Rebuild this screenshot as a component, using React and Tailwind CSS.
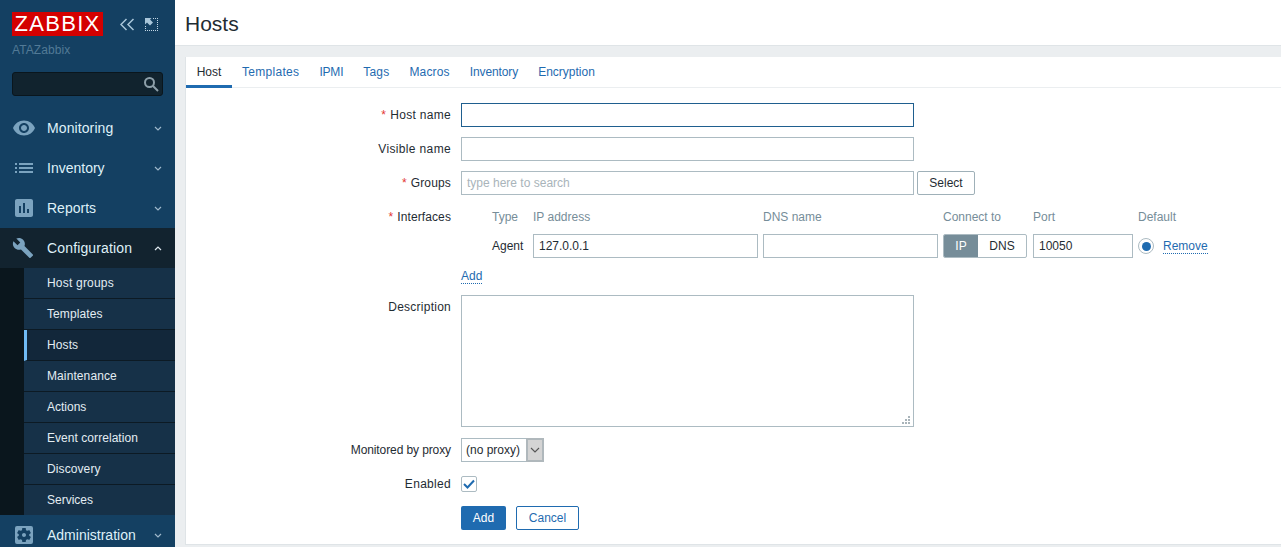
import React from "react";
import { MdRemoveRedEye, MdList, MdAssessment, MdBuild, MdSettingsApplications } from "react-icons/md";

const ChevDown = () => (
  <svg width="8" height="5" viewBox="0 0 8 5" fill="none" stroke="#9fb8cb" strokeWidth="1.2"><path d="M1 1l3 3 3-3" /></svg>
);
const ChevUp = () => (
  <svg width="8" height="5" viewBox="0 0 8 5" fill="none" stroke="#dfe9f0" strokeWidth="1.2"><path d="M1 4l3-3 3 3" /></svg>
);

function MainItem({ icon, label, active, track = "" }) {
  return (
    <div className={`h-10 shrink-0 flex items-center pl-3 pr-[13px] ${active ? "bg-[#12232f]" : ""}`}>
      <span className="w-[35px] flex items-center text-[#7ba3bf]">{icon}</span>
      <span className={`flex-1 text-[14px] text-[#dff0f8] ${track}`}>{label}</span>
      {active ? <ChevUp /> : <ChevDown />}
    </div>
  );
}

function SubItem({ label, active, last, track }) {
  return (
    <div className={`flex items-center text-[12px] text-[#e3edf3] ${track} ${last ? "h-[30px]" : "h-[31px] border-b border-[#0c1a24]"} ${active ? "bg-[#12273a] border-l-[3px] border-l-[#70bbf5] pl-5" : "pl-[23px]"}`}>
      {label}
    </div>
  );
}

const inputCls = "h-6 border border-[#acbbc2] bg-white px-[5px] text-[12px] text-[#1f2c33] flex items-center";

function Row({ label, req, children, className = "", track = "" }) {
  return (
    <div className={`flex ${className}`}>
      <div className={`w-[265px] shrink-0 text-right text-[12px] text-[#1f2c33] leading-6 ${track}`}>
        {req && <span className="text-[#e33734] mr-1">*</span>}{label}
      </div>
      <div className="ml-[10px] flex-1 min-w-0">{children}</div>
    </div>
  );
}

const tabs = [
  ["Templates", "tracking-[0.3px]"],
  ["IPMI", "tracking-[-0.2px]"],
  ["Tags", "tracking-[0.2px]"],
  ["Macros", "tracking-[0.15px]"],
  ["Inventory", "tracking-[-0.1px]"],
  ["Encryption", ""],
];
const subs = [
  ["Host groups", "tracking-[0.2px]"],
  ["Templates", "tracking-[0.1px]"],
  ["Hosts", "tracking-[0.1px]"],
  ["Maintenance", "tracking-[0.1px]"],
  ["Actions", ""],
  ["Event correlation", "tracking-[0.05px]"],
  ["Discovery", "tracking-[0.1px]"],
  ["Services", ""],
];

export default function App() {
  return (
    <div className="flex h-[547px] w-full overflow-hidden bg-[#ebeef0]" style={{ fontFamily: '"Liberation Sans", Arial, sans-serif' }}>
      <aside className="w-[175px] shrink-0 bg-[#144062] flex flex-col overflow-hidden">
        <div className="h-[108px] shrink-0 px-3 pt-3">
          <div className="flex items-center">
            <div className="w-[91px] h-6 bg-[#d40000] text-white text-[22px] leading-6 tracking-[1.3px] text-center overflow-hidden">ZABBIX</div>
            <svg className="ml-[17px]" width="15" height="13" viewBox="0 0 15 13" fill="none" stroke="#a9c6da" strokeWidth="1.5"><path d="M6.500 1L1 6.500 6.500 12M13.500 1L8 6.500l5.500 5.500" /></svg>
            <svg className="ml-[10px]" width="13" height="13" viewBox="0 0 13 13" fill="none" shapeRendering="crispEdges">
              <path d="M8 .5h4.500V12.500H.5V8" stroke="#c4d8e6" strokeDasharray="1 1" />
              <path d="M0 0h6.500L5 1.500 8 4.500 5 7.500 2 4.500 0 6.500z" fill="#a9c6da" shapeRendering="auto" />
            </svg>
          </div>
          <div className="text-[12px] leading-4 text-[#527a96] mt-[6px] tracking-[0.1px]">ATAZabbix</div>
          <div className="mt-[14px] h-6 w-[151px] rounded-[3px] bg-[#11232e] border border-[#0a161d] flex items-center justify-end pr-[3px]">
            <svg width="16" height="16" viewBox="0 0 16 16" fill="none" stroke="#8d9fa9" strokeWidth="2"><circle cx="6.500" cy="6.500" r="4.500" /><path d="M10 10l5 5" /></svg>
          </div>
        </div>
        <MainItem icon={<MdRemoveRedEye size={24} />} label="Monitoring" track="tracking-[0.1px]" />
        <MainItem icon={<MdList size={24} />} label="Inventory" />
        <MainItem icon={<MdAssessment size={24} />} label="Reports" />
        <MainItem icon={<MdBuild size={22} />} label="Configuration" active track="tracking-[0.15px]" />
        <div className="flex shrink-0">
          <div className="w-6 bg-[#0a161d]" />
          <div className="flex-1 bg-[#163148]">
            {subs.map(([s, t], i) => <SubItem key={s} label={s} track={t} active={s === "Hosts"} last={i === subs.length - 1} />)}
          </div>
        </div>
        <MainItem icon={<MdSettingsApplications size={24} />} label="Administration" />
      </aside>

      <main className="flex-1 min-w-0 flex flex-col">
        <header className="h-[46px] shrink-0 bg-white border-b border-[#dfe4e7] pl-[10px] text-[21px] leading-[47px] text-[#1f2c33]">Hosts</header>
        <section className="mt-[11px] ml-[10px] h-[488px] bg-white border border-[#dfe4e7] border-r-0 border-t-0 flex flex-col">
          <nav className="h-[31px] shrink-0 border-b border-[#ebeef0] flex text-[12px] leading-[30px]">
            <div className="w-[46px] h-[31px] text-center text-[#1f2c33] border-b-[3px] border-[#1f6bb0]">Host</div>
            <div className="flex gap-5 ml-[10px] text-[#1f6bb0]">
              {tabs.map(([t, c]) => <span key={t} className={c}>{t}</span>)}
            </div>
          </nav>
          <form className="flex flex-col pt-[15px]">
            <Row label="Host name" req track="tracking-[0.3px]">
              <div className={`${inputCls} w-[453px] !border-[#1f5f8f]`} />
            </Row>
            <Row label="Visible name" track="tracking-[0.35px]" className="mt-[10px]"><div className={`${inputCls} w-[453px]`} /></Row>
            <Row label="Groups" req track="tracking-[0.15px]" className="mt-[10px]">
              <div className="flex gap-[3px]">
                <div className={`${inputCls} w-[453px] text-[#a9b4ba]`}>type here to search</div>
                <div className="h-6 w-[58px] border border-[#9fb0b8] rounded-[2px] text-[12px] text-[#1f2c33] flex items-center justify-center">Select</div>
              </div>
            </Row>
            <Row label="Interfaces" req track="tracking-[0.1px]" className="mt-[10px]">
              <div className="flex text-[12px] text-[#768d99] leading-6 h-6">
                <span className="w-[72px] text-left pl-[31px]">Type</span>
                <span className="w-[230px]">IP address</span>
                <span className="w-[180px]">DNS name</span>
                <span className="w-[90px]">Connect to</span>
                <span className="w-[105px]">Port</span>
                <span>Default</span>
              </div>
              <div className="flex items-center mt-[5px]">
                <span className="w-[72px] pl-[31px] text-[12px] text-[#1f2c33]">Agent</span>
                <div className={`${inputCls} w-[225px]`}>127.0.0.1</div>
                <div className={`${inputCls} w-[175px] ml-[5px]`} />
                <div className="ml-[5px] flex h-6 w-[84px] text-[12px] rounded-[2px] border border-[#acbbc2] overflow-hidden">
                  <div className="w-[34px] bg-[#768d99] text-white flex items-center justify-center">IP</div>
                  <div className="flex-1 text-[#1f2c33] flex items-center justify-center">DNS</div>
                </div>
                <div className={`${inputCls} w-[100px] ml-[6px]`}>10050</div>
                <div className="ml-[5px] w-4 h-4 rounded-full border border-[#acbbc2] flex items-center justify-center">
                  <div className="w-[9px] h-[9px] rounded-full bg-[#1f6bb0]" />
                </div>
                <span className="ml-[9px] mt-px text-[12px] text-[#1f6bb0] border-b border-dotted border-[#1f6bb0] leading-[13px]">Remove</span>
              </div>
              <div className="mt-[10px] h-4 leading-[14px]">
                <span className="text-[12px] text-[#1f6bb0] border-b border-dotted border-[#1f6bb0] inline-block">Add</span>
              </div>
            </Row>
            <Row label="Description" track="tracking-[0.25px]" className="mt-[11px]">
              <div className="relative w-[453px] h-[132px]">
                <textarea className="block w-full h-full resize-none border border-[#acbbc2] bg-white outline-none" />
                <svg className="absolute right-[4px] bottom-[3px]" width="8" height="8" viewBox="0 0 8 8" fill="#a9b4ba">
                  <rect x="6" y="0" width="2" height="2" /><rect x="3" y="3" width="2" height="2" /><rect x="6" y="3" width="2" height="2" />
                  <rect x="0" y="6" width="2" height="2" /><rect x="3" y="6" width="2" height="2" /><rect x="6" y="6" width="2" height="2" />
                </svg>
              </div>
            </Row>
            <Row label="Monitored by proxy" track="tracking-[-0.1px]" className="mt-[11px]">
              <div className="flex w-[83px] h-6 border border-[#acbbc2] text-[12px] text-[#1f2c33]">
                <span className="flex-1 pl-1 leading-[22px]">(no proxy)</span>
                <span className="w-[18px] bg-[#d4d4d4] border-2 border-[#b0b8bc] flex items-center justify-center -m-px">
                  <svg width="10" height="6" viewBox="0 0 10 6" fill="none" stroke="#555" strokeWidth="1.1"><path d="M1 1l4 4 4-4" /></svg>
                </span>
              </div>
            </Row>
            <Row label="Enabled" track="tracking-[0.3px]" className="mt-[10px]">
              <div className="w-4 h-4 mt-1 border border-[#acbbc2] rounded-[2px] flex items-center justify-center">
                <svg width="12" height="10" viewBox="0 0 12 10" fill="none" stroke="#1f6bb0" strokeWidth="2"><path d="M1 5l3.500 3.500L11 1.500" /></svg>
              </div>
            </Row>
            <Row label="" className="mt-[10px]">
              <div className="flex gap-[10px] text-[12px]">
                <div className="w-[45px] h-6 bg-[#1f6bb0] text-white rounded-[2px] flex items-center justify-center">Add</div>
                <div className="w-[63px] h-6 border border-[#1f6bb0] text-[#1f6bb0] rounded-[2px] flex items-center justify-center">Cancel</div>
              </div>
            </Row>
          </form>
        </section>
      </main>
    </div>
  );
}
